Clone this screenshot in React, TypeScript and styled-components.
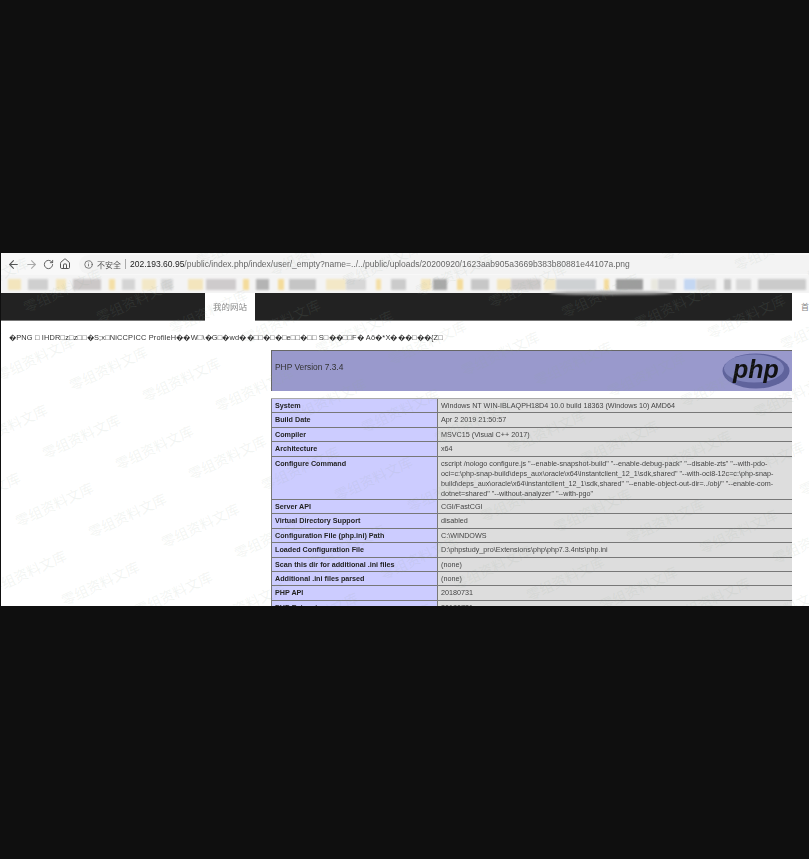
import styled, { createGlobalStyle } from "styled-components";
import { ArrowLeft, ArrowRight, RotateCw, Home, Info } from "lucide-react";

const GlobalStyle = createGlobalStyle`
  html, body {
    margin: 0;
    padding: 0;
    background: #0f0f0f;
  }
`;

const garbage =
  "�PNG □ IHDR□z□z□□�S;x□NiCCPICC ProfileH��W□\\�G□�wd��□□�□�□e□□�□□ S□��□□F� Aõ�*X���□��{Z□";

const bookmarks: [number, number, string][] = [
  [7, 13, "#f3e3b4"], [7, 20, "#c9c9c9"], [8, 10, "#f3e3b4"], [7, 28, "#c4c0c0"],
  [8, 6, "#f5dc9a"], [7, 13, "#cfcfcf"], [7, 14, "#f3e6c0"], [5, 12, "#d0d0d0"],
  [15, 15, "#f3e3b4"], [3, 30, "#c8c4c6"], [7, 6, "#f5d88c"], [7, 13, "#a9a9a9"],
  [9, 6, "#f5d88c"], [5, 27, "#bdbdbd"], [10, 20, "#f3e6c0"], [0, 20, "#d2d2d2"],
  [10, 5, "#f5dc9a"], [10, 15, "#c4c4c4"], [15, 10, "#f3e3b4"], [2, 14, "#9c9c9c"],
  [10, 6, "#f5d88c"], [8, 18, "#c0c0c0"], [8, 14, "#f3e3b4"], [0, 30, "#c6c2c2"],
  [3, 12, "#f3e6c0"], [0, 40, "#c8cbce"], [8, 5, "#f5d88c"], [7, 27, "#8f8f8f"],
  [8, 7, "#e8e6dc"], [0, 18, "#cdcdcd"], [8, 12, "#bcd2f2"], [0, 20, "#cfcfcf"],
  [8, 7, "#bdbdbd"], [5, 15, "#d5d5d5"], [7, 48, "#c4c4c4"],
];

const rows: { name: string; value: string; tall?: boolean }[] = [
  { name: "System", value: "Windows NT WIN-IBLAQPH18D4 10.0 build 18363 (Windows 10) AMD64" },
  { name: "Build Date", value: "Apr 2 2019 21:50:57" },
  { name: "Compiler", value: "MSVC15 (Visual C++ 2017)" },
  { name: "Architecture", value: "x64" },
  {
    name: "Configure Command",
    tall: true,
    value:
      'cscript /nologo configure.js "--enable-snapshot-build" "--enable-debug-pack" "--disable-zts" "--with-pdo-oci=c:\\php-snap-build\\deps_aux\\oracle\\x64\\instantclient_12_1\\sdk,shared" "--with-oci8-12c=c:\\php-snap-build\\deps_aux\\oracle\\x64\\instantclient_12_1\\sdk,shared" "--enable-object-out-dir=../obj/" "--enable-com-dotnet=shared" "--without-analyzer" "--with-pgo"',
  },
  { name: "Server API", value: "CGI/FastCGI" },
  { name: "Virtual Directory Support", value: "disabled" },
  { name: "Configuration File (php.ini) Path", value: "C:\\WINDOWS" },
  { name: "Loaded Configuration File", value: "D:\\phpstudy_pro\\Extensions\\php\\php7.3.4nts\\php.ini" },
  { name: "Scan this dir for additional .ini files", value: "(none)" },
  { name: "Additional .ini files parsed", value: "(none)" },
  { name: "PHP API", value: "20180731" },
  { name: "PHP Extension", value: "20180731" },
];

// watermark lattice, measured off the picture
const marks: { x: number; y: number }[] = [];
for (let i = -6; i < 16; i++) {
  for (let j = -4; j < 10; j++) {
    const x = 107 + i * 73 - j * 27;
    const y = 115 + i * 10.5 + j * 68;
    if (x > -60 && x < 870 && y > -30 && y < 380) marks.push({ x, y });
  }
}

export default function App() {
  return (
    <Page>
      <GlobalStyle />
      <Shot>
        <Toolbar>
          <ArrowLeft size={13} color="#555" />
          <ArrowRight size={13} color="#aaa" />
          <RotateCw size={11} color="#555" />
          <Home size={12} color="#555" />
          <Omnibox>
            <Info size={9} color="#555" />
            <Insecure>不安全</Insecure>
            <Divider />
            <Url>
              <b>202.193.60.95</b>/public/index.php/index/user/_empty?name=../../public/uploads/20200920/1623aab905a3669b383b80881e44107a.png
            </Url>
          </Omnibox>
        </Toolbar>
        <Bookmarks>
          {bookmarks.map(([gap, width, color], i) => (
            <Smudge key={i} $gap={gap} $width={width} $color={color} />
          ))}
        </Bookmarks>
        <NavRow>
          <Nav>
            <ActiveTab>我的网站</ActiveTab>
          </Nav>
          <NavRest>首</NavRest>
        </NavRow>
        <Content>
          <Garbage>{garbage}</Garbage>
          <PhpInfo>
            <Banner>
              <BannerTitle>PHP Version 7.3.4</BannerTitle>
              <PhpLogo viewBox="0 0 68 36">
                <ellipse cx="34" cy="18" rx="33.5" ry="17.5" fill="#5f639c" />
                <ellipse cx="32" cy="15.5" rx="30" ry="14" fill="#8084bb" />
                <LogoText x="34" y="25" textAnchor="middle">php</LogoText>
              </PhpLogo>
            </Banner>
            <InfoTable>
              {rows.map((row) => (
                <InfoRow key={row.name} $tall={row.tall}>
                  <KeyCell>{row.name}</KeyCell>
                  <ValueCell>{row.value}</ValueCell>
                </InfoRow>
              ))}
            </InfoTable>
          </PhpInfo>
        </Content>
        <BookmarkShadow />
        <Marks>
          {marks.map((m) => (
            <Mark key={`${m.x}-${m.y}`} style={{ left: m.x, top: m.y }}>
              零组资料文库
            </Mark>
          ))}
        </Marks>
      </Shot>
    </Page>
  );
}

const Page = styled.div`
  width: 809px;
  height: 859px;
  padding-top: 253px;
  box-sizing: border-box;
  background: #0f0f0f;
  overflow: hidden;
`;

const Shot = styled.div`
  position: relative;
  margin-left: 1px;
  height: 353px;
  background: #fff;
  overflow: hidden;
  font-family: "Liberation Sans", "Noto Sans CJK SC", sans-serif;
`;

const Toolbar = styled.div`
  height: 22px;
  padding-left: 6px;
  display: flex;
  align-items: center;
  gap: 5px;
  background: #f8f8f8;
  filter: blur(0.3px);
`;

const Omnibox = styled.div`
  flex: 1;
  height: 19px;
  margin-left: 3px;
  padding-left: 5px;
  display: flex;
  align-items: center;
  gap: 4px;
  border-radius: 10px 0 0 10px;
  background: #f3f3f3;
`;

const Insecure = styled.span`
  font-size: 8px;
  color: #555;
`;

const Divider = styled.span`
  width: 1px;
  height: 10px;
  background: #aaa;
`;

const Url = styled.span`
  font-size: 8.5px;
  white-space: nowrap;
  color: #666;
  b {
    font-weight: 400;
    color: #222;
  }
`;

const Bookmarks = styled.div`
  height: 18px;
  display: flex;
  align-items: center;
  background: #f4f4f4;
  overflow: hidden;
`;

const Smudge = styled.span<{ $gap: number; $width: number; $color: string }>`
  flex: none;
  height: 11px;
  margin-left: ${(p) => p.$gap}px;
  width: ${(p) => p.$width}px;
  background: ${(p) => p.$color};
  opacity: 0.85;
  filter: blur(1.2px);
`;

const BookmarkShadow = styled.div`
  position: absolute;
  left: 548px;
  top: 38px;
  width: 124px;
  height: 4px;
  border-radius: 50%;
  background: #a0a0a0;
  filter: blur(1.2px);
`;

const NavRow = styled.div`
  height: 28px;
  display: flex;
`;

const Nav = styled.div`
  width: 791px;
  padding-left: 204px;
  box-sizing: border-box;
  background: #222;
  border-bottom: 1px solid #777;
`;

const ActiveTab = styled.div`
  width: 50px;
  height: 28px;
  background: #fff;
  text-align: center;
  font-size: 8.5px;
  line-height: 29px;
  color: #888;
  filter: blur(0.3px);
`;

const NavRest = styled.div`
  flex: 1;
  padding-left: 9px;
  font-size: 8px;
  line-height: 29px;
  white-space: nowrap;
  overflow: hidden;
  color: #888;
`;

const Content = styled.div`
  filter: blur(0.35px);
`;

const Garbage = styled.p`
  margin: 0;
  height: 29px;
  padding: 12px 0 0 8px;
  box-sizing: border-box;
  font-size: 7.4px;
  letter-spacing: 0.17px;
  line-height: 10px;
  white-space: nowrap;
  color: #333;
`;

const PhpInfo = styled.div`
  width: 521px;
  margin-left: 270px;
`;

const Banner = styled.div`
  height: 41px;
  padding: 0 2px 0 3px;
  display: flex;
  align-items: center;
  justify-content: space-between;
  box-sizing: border-box;
  background: #9999cc;
  border: 1px solid #666;
  border-width: 1px 0 0 1px;
`;

const BannerTitle = styled.h1`
  margin: 0 0 8px;
  font-size: 8.4px;
  font-weight: 400;
  color: #333;
`;

const PhpLogo = styled.svg`
  width: 68px;
  height: 36px;
`;

const LogoText = styled.text`
  font-size: 25px;
  font-style: italic;
  font-weight: 700;
  fill: #111;
`;

const InfoTable = styled.div`
  margin-top: 7px;
  border-top: 1px solid #aaa;
`;

const InfoRow = styled.div<{ $tall?: boolean }>`
  display: grid;
  grid-template-columns: 167px 1fr;
  height: ${(p) => (p.$tall ? 43 : 14.45)}px;
  box-sizing: border-box;
  border-bottom: 1px solid #777;
  font-size: 7.2px;
  line-height: 10px;
`;

const KeyCell = styled.div`
  padding: 2px 3px 0;
  background: #ccccff;
  font-weight: 700;
  color: #222;
  white-space: nowrap;
  border-left: 1px solid #777;
  border-right: 1px solid #777;
`;

const ValueCell = styled.div`
  padding: 2px 3px 0;
  background: #dddddd;
  color: #444;
`;

const Marks = styled.div`
  position: absolute;
  inset: 0;
  pointer-events: none;
`;

const Mark = styled.span`
  position: absolute;
  transform: translate(-50%, -50%) rotate(-25deg);
  font-family: "Noto Sans CJK SC", sans-serif;
  font-size: 14px;
  white-space: nowrap;
  color: rgba(150, 170, 155, 0.12);
`;
